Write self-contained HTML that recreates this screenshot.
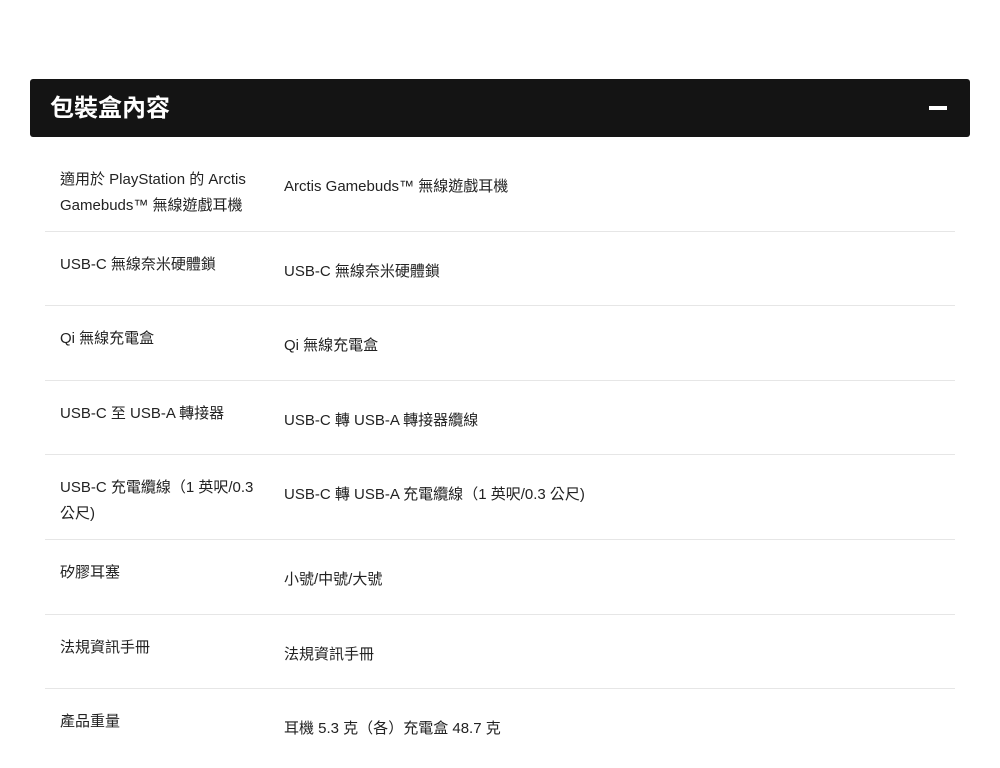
<!DOCTYPE html>
<html><head><meta charset="utf-8"><style>
body{margin:0;background:#fff;width:1000px;height:768px;position:relative;overflow:hidden;font-family:"Liberation Sans","Noto Sans CJK TC",sans-serif;color:#222}
.hd{position:absolute;left:30px;top:79px;width:940px;height:58px;background:#141414;border-radius:3px}
.hd h2{margin:0;position:absolute;left:20px;top:1px;line-height:58px;font-size:24px;font-weight:bold;color:#fff}
.mi{position:absolute;left:899px;top:27px;width:18px;height:4px;background:#fff}
.row{position:absolute;left:45px;width:910px;border-bottom:1px solid #e6e6e6}
.l,.r{position:absolute;font-size:15px;line-height:26px}
.l{left:15px;top:21px;width:205px}
.r{left:239px;top:28px}
</style></head><body>
<div class="hd"><h2>包裝盒內容</h2><div class="mi"></div></div>
<div class="row" style="top:146px;height:85px"><div class="l">適用於 PlayStation 的 Arctis Gamebuds™ 無線遊戲耳機</div><div class="r">Arctis Gamebuds™ 無線遊戲耳機</div></div>
<div class="row" style="top:231px;height:74px"><div class="l">USB-C 無線奈米硬體鎖</div><div class="r">USB-C 無線奈米硬體鎖</div></div>
<div class="row" style="top:305px;height:75px"><div class="l">Qi 無線充電盒</div><div class="r">Qi 無線充電盒</div></div>
<div class="row" style="top:380px;height:74px"><div class="l">USB-C 至 USB-A 轉接器</div><div class="r">USB-C 轉 USB-A 轉接器纜線</div></div>
<div class="row" style="top:454px;height:85px"><div class="l">USB-C 充電纜線（1 英呎/0.3 公尺)</div><div class="r">USB-C 轉 USB-A 充電纜線（1 英呎/0.3 公尺)</div></div>
<div class="row" style="top:539px;height:75px"><div class="l">矽膠耳塞</div><div class="r">小號/中號/大號</div></div>
<div class="row" style="top:614px;height:74px"><div class="l">法規資訊手冊</div><div class="r">法規資訊手冊</div></div>
<div class="row" style="top:688px;height:80px;border:none"><div class="l">產品重量</div><div class="r">耳機 5.3 克（各）充電盒 48.7 克</div></div>
</body></html>
